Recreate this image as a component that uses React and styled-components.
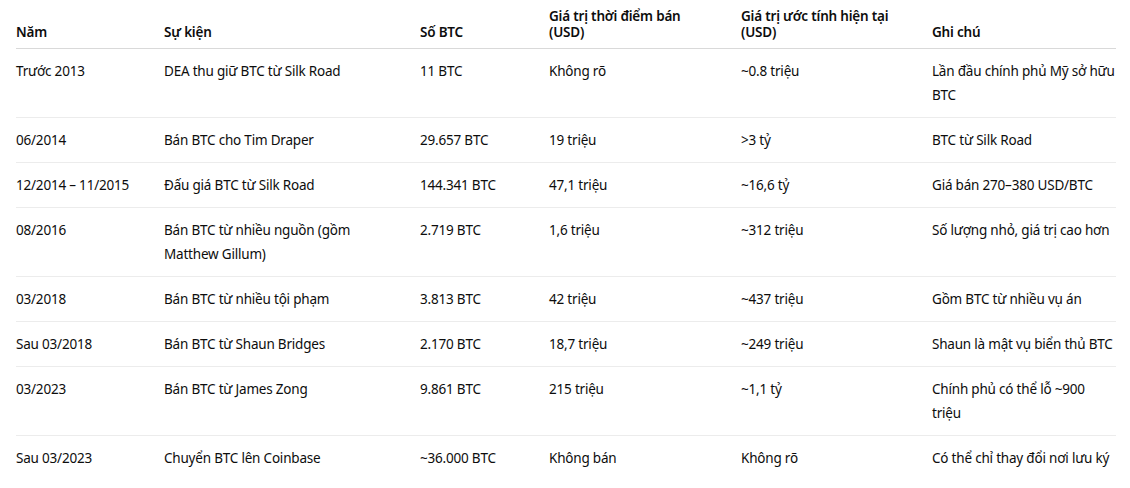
import React from "react";
import styled, { createGlobalStyle } from "styled-components";

const Global = createGlobalStyle`
  html, body { margin: 0; padding: 0; background: #ffffff; }
  body {
    font-family: "Segoe UI", "Noto Sans", "Liberation Sans", sans-serif;
    color: #0d0d0d;
    -webkit-font-smoothing: antialiased;
  }
`;

const Wrapper = styled.div`
  padding: 0 14px 0 16px;
`;

const Table = styled.table`
  width: 1100px;
  border-collapse: collapse;
  table-layout: fixed;
  font-size: 13.5px;
  letter-spacing: -0.2px;
`;

const HeadCell = styled.th`
  text-align: left;
  vertical-align: bottom;
  font-weight: 600;
  line-height: 16px;
  padding: 8px 16px 8px 0;
  border-bottom: 1px solid #d9d9d9;
  &:last-child { padding-right: 0; }
`;

const Row = styled.tr`
  & + & td { border-top: 1px solid #ececec; }
`;

const Cell = styled.td`
  vertical-align: top;
  line-height: 24px;
  padding: 10px 16px 10px 0;
  &:last-child { padding-right: 0; }
`;

const columns = [
  { w: 148, label: ["Năm"] },
  { w: 256, label: ["Sự kiện"] },
  { w: 129, label: ["Số BTC"] },
  { w: 192, label: ["Giá trị thời điểm bán", "(USD)"] },
  { w: 191, label: ["Giá trị ước tính hiện tại", "(USD)"] },
  { w: 184, label: ["Ghi chú"] },
];

const rows = [
  ["Trước 2013", "DEA thu giữ BTC từ Silk Road", "11 BTC", "Không rõ", "~0.8 triệu", "Lần đầu chính phủ Mỹ sở hữu BTC"],
  ["06/2014", "Bán BTC cho Tim Draper", "29.657 BTC", "19 triệu", ">3 tỷ", "BTC từ Silk Road"],
  ["12/2014 – 11/2015", "Đấu giá BTC từ Silk Road", "144.341 BTC", "47,1 triệu", "~16,6 tỷ", "Giá bán 270–380 USD/BTC"],
  ["08/2016", "Bán BTC từ nhiều nguồn (gồm Matthew Gillum)", "2.719 BTC", "1,6 triệu", "~312 triệu", "Số lượng nhỏ, giá trị cao hơn"],
  ["03/2018", "Bán BTC từ nhiều tội phạm", "3.813 BTC", "42 triệu", "~437 triệu", "Gồm BTC từ nhiều vụ án"],
  ["Sau 03/2018", "Bán BTC từ Shaun Bridges", "2.170 BTC", "18,7 triệu", "~249 triệu", "Shaun là mật vụ biển thủ BTC"],
  ["03/2023", "Bán BTC từ James Zong", "9.861 BTC", "215 triệu", "~1,1 tỷ", "Chính phủ có thể lỗ ~900 triệu"],
  ["Sau 03/2023", "Chuyển BTC lên Coinbase", "~36.000 BTC", "Không bán", "Không rõ", "Có thể chỉ thay đổi nơi lưu ký"],
];

export default function App() {
  return (
    <Wrapper>
      <Global />
      <Table>
        <colgroup>
          {columns.map((c, i) => (
            <col key={i} style={{ width: c.w }} />
          ))}
        </colgroup>
        <thead>
          <tr>
            {columns.map((c, i) => (
              <HeadCell key={i}>
                {c.label.map((l, j) => (
                  <React.Fragment key={j}>
                    {j > 0 && <br />}
                    {l}
                  </React.Fragment>
                ))}
              </HeadCell>
            ))}
          </tr>
        </thead>
        <tbody>
          {rows.map((r, i) => (
            <Row key={i}>
              {r.map((v, j) => (
                <Cell key={j}>{v}</Cell>
              ))}
            </Row>
          ))}
        </tbody>
      </Table>
    </Wrapper>
  );
}
